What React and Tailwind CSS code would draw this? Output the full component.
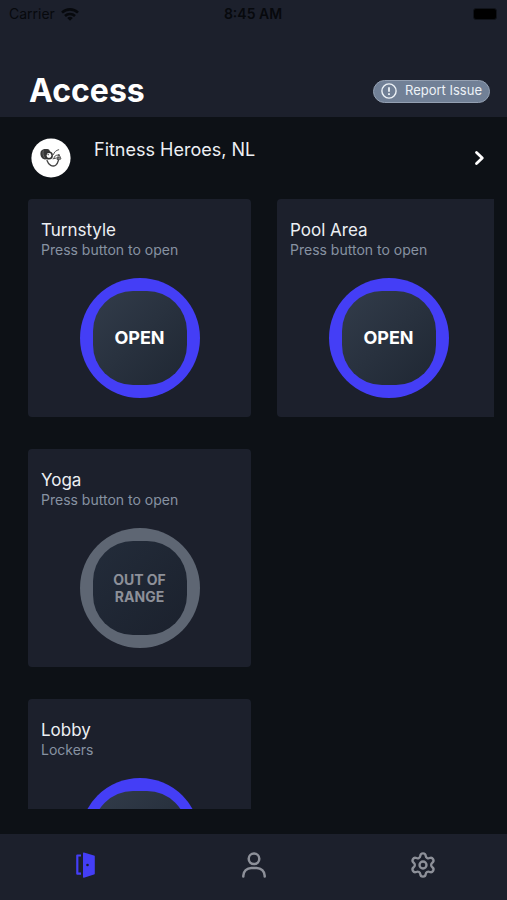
import { Settings } from 'lucide-react';

const doors = [
  { name: 'Turnstyle', hint: 'Press button to open', inRange: true },
  { name: 'Pool Area', hint: 'Press button to open', inRange: true },
  { name: 'Yoga', hint: 'Press button to open', inRange: false },
  null,
  { name: 'Lobby', hint: 'Lockers', inRange: true },
];

const StatusBar = () => (
  <div className="grid grid-cols-3 items-center h-7 pl-[9px] pr-[10px] text-sm text-[#07090d]">
    <div className="flex items-center gap-[6px]">
      <span>Carrier</span>
      <svg className="w-[18px] h-[13px]" viewBox="0 0 18 13" fill="none" stroke="currentColor" strokeWidth="2.6">
        <path d="M1 4.6a11.5 11.5 0 0 1 16 0" />
        <path d="M4 8a7.2 7.2 0 0 1 10 0" />
        <path d="M9 12.8 6.2 10a4 4 0 0 1 5.6 0z" fill="currentColor" stroke="none" />
      </svg>
    </div>
    <span className="text-center font-semibold">8:45 AM</span>
    <div className="justify-self-end w-6 h-3 rounded-[3px] bg-black border border-[#10131a]" />
  </div>
);

const Header = () => (
  <header className="shrink-0 bg-[#1c202c]">
    <StatusBar />
    <div className="flex items-center justify-between pl-[29px] pr-[17px] pt-[43px] pb-[6px]">
      <h1 className="text-[32px] leading-10 font-bold text-white">Access</h1>
      <button
        type="button"
        className="flex items-center gap-2 h-[23px] px-[7px] rounded-full border border-[#94a0b2] bg-[#718096] text-[13px] text-[#edf2f7]"
      >
        <svg className="w-4 h-4" viewBox="0 0 16 16" fill="none" stroke="currentColor" strokeWidth="1.4">
          <circle cx="8" cy="8" r="7.1" />
          <path d="M8 4.2v4.6M8 10.3v1.6" strokeWidth="1.8" />
        </svg>
        <span>Report Issue</span>
      </button>
    </div>
  </header>
);

const GymLogo = () => (
  <svg className="w-10 h-10 shrink-0" viewBox="0 0 40 40" fill="none">
    <circle cx="20" cy="20" r="19.6" fill="#fff" />
    <path d="M9.8 13.2c1.6-2.4 5-2.6 8.200-1.800l2 3.500-1.200 6-5 .6c-3.600-.8-5.200-4.600-4-8.300z" fill="#383838" />
    <path d="M12.300 12.500c-.8 3 0 5.500 1.300 7.500" stroke="#8a8a8a" strokeWidth=".6" />
    <circle cx="18" cy="17.500" r="3.200" fill="#fff" stroke="#333" strokeWidth="1.500" />
    <circle cx="17.200" cy="16.600" r=".8" fill="#666" />
    <path d="M16 22.500c1.500 4.500 5.500 6.800 8.700 4.700 2.200-1.500 2.400-4 3.300-6.700" stroke="#444" strokeWidth="1.300" strokeLinecap="round" />
    <path d="M22.500 16.500c.6-2.400 2.500-4.200 5.200-4.800M23 20.500c0-2.300 1.800-3.700 4.500-3.500M22 20.800l7-1.600M28 16.500l2 4.500-3.500.5z" stroke="#555" strokeWidth="1" strokeLinecap="round" />
  </svg>
);

const LocationRow = () => (
  <a href="#location" className="shrink-0 flex items-center h-[82px] pl-[31px] pr-[21px] text-white">
    <GymLogo />
    <span className="flex-1 ml-[23px] pb-[17px] text-lg leading-6 text-[#eceff3]">Fitness Heroes, NL</span>
    <svg className="w-3 h-4" viewBox="0 0 12 16" fill="none" stroke="currentColor" strokeWidth="2.8" strokeLinecap="round" strokeLinejoin="round">
      <path d="M2.500 2.500 8.300 8 2.500 13.500" />
    </svg>
  </a>
);

const OpenButton = ({ inRange }) => (
  <button
    type="button"
    disabled={!inRange}
    className={`w-[120px] h-[120px] p-[13px] rounded-full ${inRange ? 'bg-[#443ef6]' : 'bg-[#5e6673]'}`}
  >
    <span
      className={`flex items-center justify-center w-full h-full rounded-[40px] font-bold text-center
        ${inRange
          ? 'bg-linear-to-br from-[#323c4a] to-[#1f2733] text-lg text-white'
          : 'bg-linear-to-br from-[#232c3a] to-[#1b212d] text-sm leading-[17px] text-[#8d9099]'
        }`}
    >
      {inRange ? 'OPEN' : <>OUT OF<br />RANGE</>}
    </span>
  </button>
);

const DoorCard = ({ door }) => (
  <section className="h-[218px] px-[13px] pt-5 rounded bg-[#1c202c]">
    <h2 className="text-[17px] leading-[22px] text-[#eceff3]">{door.name}</h2>
    <p className="text-sm leading-[18px] text-[#8792a2]">{door.hint}</p>
    <div className="flex justify-center mt-[19px]">
      <OpenButton inRange={door.inRange} />
    </div>
  </section>
);

const DoorIcon = () => (
  <svg className="w-6 h-7" viewBox="0 0 24 28" fill="none">
    <path d="M8 4.500H4.300v18.200H8" stroke="#443ef6" strokeWidth="2.200" strokeLinejoin="round" />
    <path d="M10 2.200q0-.9.900-.7L21 4.600q.8.200.8 1v17q0 .8-.8 1L10.900 26.700q-.9.200-.9-.7z" fill="#443ef6" />
    <circle cx="14.500" cy="14" r="1.300" fill="#1c202c" />
  </svg>
);

const PersonIcon = () => (
  <svg className="w-7 h-7" viewBox="0 0 28 28" fill="none" stroke="currentColor" strokeWidth="2.5" strokeLinecap="round">
    <circle cx="14" cy="7.800" r="5.300" />
    <path d="M3.300 25.500v-.8a8 8 0 0 1 8-7.800h5.400a8 8 0 0 1 8 7.800v.8" />
  </svg>
);

const TabBar = () => (
  <nav className="shrink-0 grid grid-cols-3 justify-items-center items-start h-[66px] pt-[17px] bg-[#1c202c] text-[#8d9099]">
    <a href="#access" aria-label="Access"><DoorIcon /></a>
    <a href="#profile" aria-label="Profile"><PersonIcon /></a>
    <a href="#settings" aria-label="Settings"><Settings className="w-7 h-7" strokeWidth={2} /></a>
  </nav>
);

export default function App() {
  return (
    <div className="flex flex-col h-screen bg-[#0d1116] font-['Inter',sans-serif]">
      <Header />
      <LocationRow />
      <main className="flex-1 min-h-0 ml-7 mr-[13px] mb-[25px] overflow-x-hidden overflow-y-auto [scrollbar-width:none]">
        {/* the second column runs slightly past the list's right edge */}
        <div className="grid grid-cols-2 gap-x-[26px] gap-y-8 -mr-[6px]">
          {doors.map((door, i) => (door ? <DoorCard key={i} door={door} /> : <div key={i} />))}
        </div>
      </main>
      <TabBar />
    </div>
  );
}
